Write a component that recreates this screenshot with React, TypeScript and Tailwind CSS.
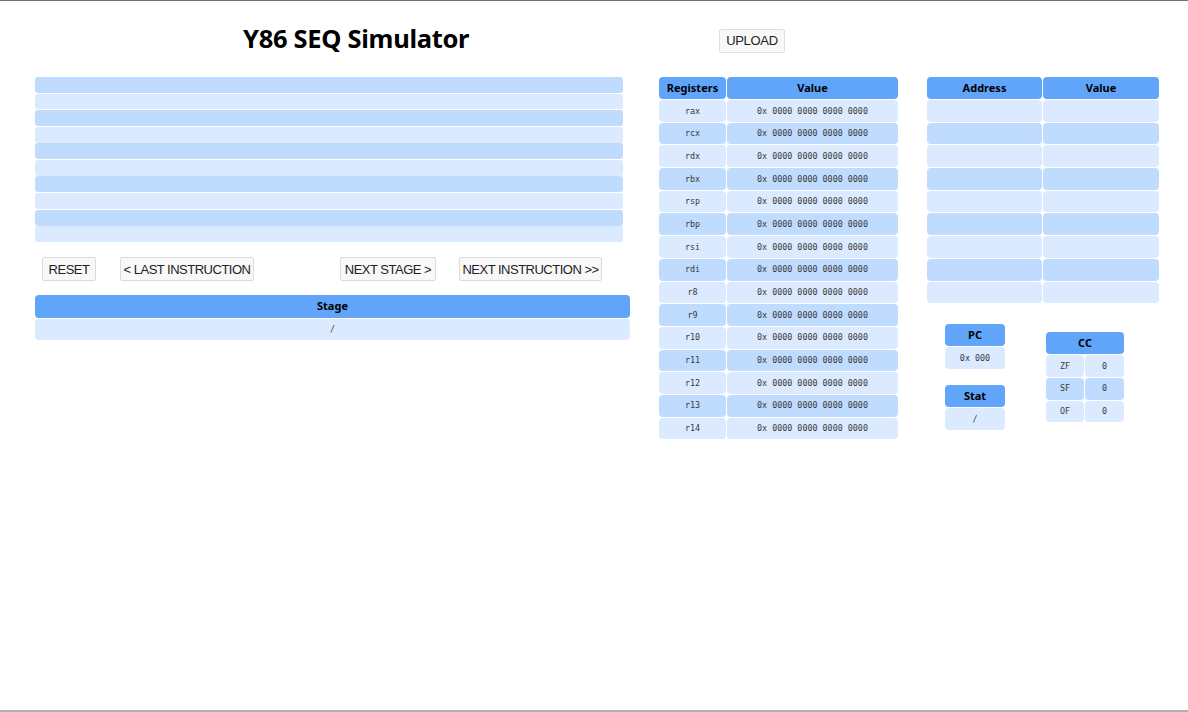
const registers = ["rax", "rcx", "rdx", "rbx", "rsp", "rbp", "rsi", "rdi", "r8", "r9", "r10", "r11", "r12", "r13", "r14"];
const flags = [
  { name: "ZF", value: "0" },
  { name: "SF", value: "0" },
  { name: "OF", value: "0" },
];

const head = "bg-[#60a5fa] rounded-[4px] flex items-center justify-center font-bold text-[11px] text-black";
const mono = "font-['DejaVu_Sans_Mono',monospace] text-[8.4px] text-[#3a3a3a]";

function rowBg(i: number) {
  return i % 2 === 0 ? "bg-[#dbeafe]" : "bg-[#bfdbfe]";
}

function Btn({ children, className = "" }: { children: React.ReactNode; className?: string }) {
  return (
    <button className={`shrink-0 whitespace-nowrap h-[24px] flex items-center justify-center bg-[#f8f8f8] border border-[#dcdcdc] rounded-[2px] text-[13px] tracking-[-0.5px] text-[#222] font-['Liberation_Sans',Arial,sans-serif] leading-none ${className}`}>
      {children}
    </button>
  );
}

export default function App() {
  return (
    <div className="w-[1188px] h-[712px] bg-white border-t border-t-[#707070] border-b-2 border-b-[#b0b0b0] font-['Noto_Sans',sans-serif] overflow-hidden">
      {/* header */}
      <div className="flex items-center h-[76px] pb-[1px]">
        <h1 className="w-[712px] pl-[243px] text-[25.5px] font-bold text-black tracking-[-0.3px]">Y86 SEQ Simulator</h1>
        <button className="ml-[7px] mt-[4px] h-[24px] w-[66px] bg-[#f8f8f8] border border-[#dedede] rounded-[2px] text-[13px] tracking-[-0.3px] text-[#222] font-['Liberation_Sans',Arial,sans-serif]">
          UPLOAD
        </button>
      </div>

      <div className="flex items-start">
        {/* left: instructions + controls */}
        <div className="ml-[35px] w-[595px] shrink-0">
          <div className="flex flex-col gap-[0.7px] w-[588px]">
            {Array.from({ length: 10 }).map((_, i) => (
              <div key={i} className={`h-[15.9px] rounded-[3px] ${i % 2 === 0 ? "bg-[#bfdbfe]" : "bg-[#dbeafe]"}`} />
            ))}
          </div>

          <div className="flex items-center mt-[15px] pl-[7px]">
            <Btn className="w-[54px]">RESET</Btn>
            <Btn className="ml-[24px] w-[134px]">&lt; LAST INSTRUCTION</Btn>
            <Btn className="ml-[86px] w-[96px]">NEXT STAGE &gt;</Btn>
            <Btn className="ml-[23px] w-[143px]">NEXT INSTRUCTION &gt;&gt;</Btn>
          </div>

          <div className="mt-[14px] flex flex-col gap-px">
            <div className={`${head} h-[23px]`}>Stage</div>
            <div className={`h-[21px] rounded-[4px] bg-[#dbeafe] flex items-center justify-center ${mono}`}>/</div>
          </div>
        </div>

        {/* registers */}
        <div className="ml-[29px] grid grid-cols-[67px_171px] gap-px w-[239px] shrink-0">
          <div className={`${head} h-[22px]`}>Registers</div>
          <div className={`${head} h-[22px]`}>Value</div>
          {registers.map((r, i) => (
            <div key={r} className="contents">
              <div className={`h-[21.7px] rounded-[4px] flex items-center justify-center ${rowBg(i)} ${mono}`}>{r}</div>
              <div className={`h-[21.7px] rounded-[4px] flex items-center justify-center ${rowBg(i)} ${mono}`}>0x 0000 0000 0000 0000</div>
            </div>
          ))}
        </div>

        {/* memory + pc/stat/cc */}
        <div className="ml-[29px] w-[232px] shrink-0">
          <div className="grid grid-cols-[115px_116px] gap-px">
            <div className={`${head} h-[22px]`}>Address</div>
            <div className={`${head} h-[22px]`}>Value</div>
            {Array.from({ length: 9 }).map((_, i) => (
              <div key={i} className="contents">
                <div className={`h-[21.7px] rounded-[4px] ${rowBg(i)}`} />
                <div className={`h-[21.7px] rounded-[4px] ${rowBg(i)}`} />
              </div>
            ))}
          </div>

          <div className="flex items-start mt-[21px]">
            <div className="ml-[18px] w-[60px] flex flex-col">
              <div className="flex flex-col gap-px">
                <div className={`${head} h-[22px]`}>PC</div>
                <div className={`h-[22px] rounded-[4px] bg-[#dbeafe] flex items-center justify-center ${mono}`}>0x 000</div>
              </div>
              <div className="flex flex-col gap-px mt-[16px]">
                <div className={`${head} h-[22px]`}>Stat</div>
                <div className={`h-[22px] rounded-[4px] bg-[#dbeafe] flex items-center justify-center ${mono}`}>/</div>
              </div>
            </div>

            <div className="ml-[41px] mt-[8px] w-[78px] grid grid-cols-[38px_39px] gap-px">
              <div className={`${head} h-[22px] col-span-2`}>CC</div>
              {flags.map((f, i) => (
                <div key={f.name} className="contents">
                  <div className={`h-[21.7px] rounded-[4px] flex items-center justify-center ${rowBg(i)} ${mono}`}>{f.name}</div>
                  <div className={`h-[21.7px] rounded-[4px] flex items-center justify-center ${rowBg(i)} ${mono}`}>{f.value}</div>
                </div>
              ))}
            </div>
          </div>
        </div>
      </div>
    </div>
  );
}
